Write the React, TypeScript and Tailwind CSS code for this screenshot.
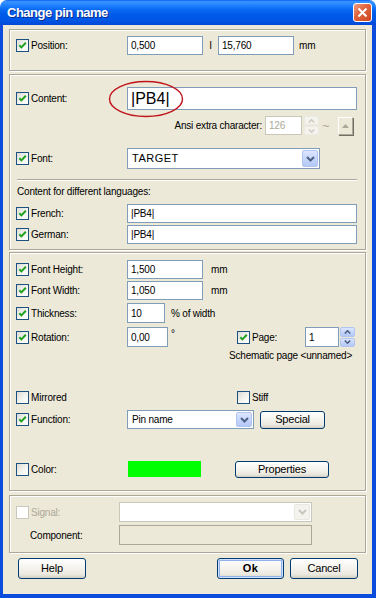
import React from "react";

const Check = ({ checked = true, disabled = false }: { checked?: boolean; disabled?: boolean }) => (
  <span
    className={
      "relative inline-block w-[13px] h-[13px] shrink-0 border " +
      (disabled
        ? "border-[#cac8bb] bg-white"
        : "border-[#1c5180] bg-[linear-gradient(135deg,#dcdcd7_0%,#f4f4f0_55%,#ffffff_100%)]")
    }
  >
    {checked && (
      <svg className="absolute left-0 top-0" width="11" height="11" viewBox="0 0 11 11">
        <path d="M2.3 5.2 L4.4 7.4 L8.8 2.8" fill="none" stroke="#21a121" strokeWidth="2" />
      </svg>
    )}
  </span>
);

const Label = ({
  checked = true,
  disabled = false,
  text,
  w = "w-[111px]",
}: {
  checked?: boolean;
  disabled?: boolean;
  text: string;
  w?: string;
}) => (
  <div className={w + " flex items-center shrink-0"}>
    <Check checked={checked} disabled={disabled} />
    <span className={"ml-[2px] " + (disabled ? "text-[#aca899]" : "")}>{text}</span>
  </div>
);

const Input = ({ w, h = "h-[19px]", children, big = false }: { w: string; h?: string; children?: React.ReactNode; big?: boolean }) => (
  <div
    className={
      w +
      " " +
      h +
      " shrink-0 border border-[#7f9db9] bg-white flex items-center pl-[3px] " +
      (big ? "text-[16px] tracking-normal" : "")
    }
  >
    {children}
  </div>
);

const Chevron = ({ color = "#4d6185" }: { color?: string }) => (
  <svg width="9" height="6" viewBox="0 0 9 6">
    <path d="M1 1 L4.5 4.5 L8 1" fill="none" stroke={color} strokeWidth="2" />
  </svg>
);

const ComboButton = ({ disabled = false }: { disabled?: boolean }) => (
  <div
    className={
      "w-[16px] h-full ml-auto border rounded-[2px] flex items-center justify-center " +
      (disabled
        ? "border-[#e8e7e0] bg-[#f4f3ee]"
        : "border-[#b2c5f1] bg-[linear-gradient(180deg,#dde7fe_0%,#c6d6fb_50%,#b4c8f6_100%)]")
    }
  >
    <Chevron color={disabled ? "#c9c7ba" : "#4d6185"} />
  </div>
);

const Combo = ({ w, h = "h-[19px]", text, disabled = false, big = false }: { w: string; h?: string; text?: string; disabled?: boolean; big?: boolean }) => (
  <div
    className={
      w +
      " " +
      h +
      " shrink-0 border bg-white flex items-center p-[1px] " +
      (disabled ? "border-[#c9c7ba]" : "border-[#7f9db9]")
    }
  >
    <span className={"pl-[3px] " + (big ? "text-[11px] tracking-[0.5px]" : "")}>{text}</span>
    <ComboButton disabled={disabled} />
  </div>
);

const XPButton = ({ w, h = "h-[21px]", children, def = false, bold = false }: { w: string; h?: string; children: React.ReactNode; def?: boolean; bold?: boolean }) => (
  <div
    className={
      w +
      " " +
      h +
      " shrink-0 border border-[#003c74] rounded-[3px] flex items-center justify-center text-[11px] bg-[linear-gradient(180deg,#ffffff_0%,#f5f4ee_45%,#ebe9e0_80%,#d6d0c5_100%)] " +
      (def ? "shadow-[inset_0_0_0_1px_#cee0fb,inset_0_0_0_2px_#8fb2ef] " : "shadow-[inset_0_-1px_0_#d8d2c6] ") +
      (bold ? "font-bold tracking-[0.5px]" : "")
    }
  >
    {children}
  </div>
);

const Spin = ({ disabled = false }: { disabled?: boolean }) => (
  <div className="w-[15px] h-full flex flex-col gap-[1px] shrink-0">
    {[0, 1].map((i) => (
      <div
        key={i}
        className={
          "flex-1 rounded-[2px] flex items-center justify-center border " +
          (disabled
            ? "border-[#ebeae4] bg-[#f4f3ee]"
            : "border-[#b2c5f1] bg-[linear-gradient(180deg,#dde7fe_0%,#c6d6fb_50%,#b4c8f6_100%)]")
        }
      >
        <svg width="7" height="4" viewBox="0 0 7 4" className={i === 0 ? "rotate-180" : ""}>
          <path d="M0.8 0.5 L3.5 3.2 L6.2 0.5" fill="none" stroke={disabled ? "#cfcdc2" : "#4d6185"} strokeWidth="1.6" />
        </svg>
      </div>
    ))}
  </div>
);

const Panel = ({ h, mt = "", children, rel = false }: { h: string; mt?: string; children: React.ReactNode; rel?: boolean }) => (
  <div
    className={
      h +
      " " +
      mt +
      " shrink-0 border border-[#aca899] shadow-[inset_1px_1px_0_#ffffff,1px_1px_0_#ffffff] flex flex-col pl-[6px] " +
      (rel ? "relative" : "")
    }
  >
    {children}
  </div>
);

export default function App() {
  return (
    <div className="w-[376px] h-[598px] bg-white overflow-hidden font-['Liberation_Sans',Arial,sans-serif] text-[10px] tracking-[-0.2px] text-black">
      <div className="w-full h-full flex flex-col rounded-t-[7px] overflow-hidden">
        {/* Title bar */}
        <div className="h-[25px] shrink-0 flex items-center pl-[7px] pr-[4px] bg-[linear-gradient(180deg,#0a5ff0_0%,#3d95ff_7%,#2386ff_18%,#0b6af4_38%,#005ae8_58%,#0055e5_82%,#0047d6_100%)]">
          <span className="text-white font-bold text-[13px] tracking-[-0.5px] [text-shadow:1px_1px_0_#0a2d8c]">
            Change pin name
          </span>
          <div className="ml-auto w-[19px] h-[19px] rounded-[3px] border border-white bg-[linear-gradient(135deg,#f0a184_0%,#e1663f_40%,#cc4520_100%)] flex items-center justify-center">
            <svg width="11" height="11" viewBox="0 0 11 11">
              <path d="M1.5 1.5 L9.5 9.5 M9.5 1.5 L1.5 9.5" stroke="#ffffff" strokeWidth="2" />
            </svg>
          </div>
        </div>

        {/* Body */}
        <div className="flex-1 flex flex-col bg-[#ece9d8] border-l-[3px] border-r-[4px] border-b-[4px] border-[#0b4cdc] px-[6px] pt-[4px]">
          {/* Panel 1 */}
          <Panel h="h-[42px]">
            <div className="flex items-center h-[19px] mt-[6px]">
              <Label text="Position:" />
              <Input w="w-[76px]">0,500</Input>
              <span className="w-[15px] text-center">I</span>
              <Input w="w-[76px]">15,760</Input>
              <span className="ml-[5px]">mm</span>
            </div>
          </Panel>

          {/* Panel 2 */}
          <Panel h="h-[176px]" mt="mt-[3px]" rel>
            <div className="flex items-center h-[23px] mt-[12px]">
              <Label text="Content:" />
              <Input w="w-[230px]" h="h-[23px]" big>
                |PB4|
              </Input>
            </div>
            <div className="flex items-center justify-end h-[19px] mt-[6px] pr-[12px]">
              <span className="mr-[3px]">Ansi extra character:</span>
              <div className="w-[37px] h-full border border-[#c9c7ba] bg-white flex items-center pl-[3px] text-[#aca899]">126</div>
              <div className="ml-[2px] h-full flex">
                <Spin disabled />
              </div>
              <span className="ml-[3px] w-[10px] text-[#aca899] text-[13px] leading-none">~</span>
              <div className="ml-[6px] w-[15px] h-[18px] border border-[#aca899] border-t-white border-l-white shadow-[1px_1px_0_#716f64] flex items-center justify-center">
                <svg width="7" height="4" viewBox="0 0 7 4">
                  <path d="M0 4 L3.5 0 L7 4 Z" fill="#aca899" />
                </svg>
              </div>
            </div>
            <div className="flex items-center h-[21px] mt-[13px]">
              <Label text="Font:" />
              <Combo w="w-[193px]" h="h-[21px]" text="TARGET" big />
            </div>
            <div className="h-[2px] mt-[10px] ml-[1px] mr-[8px] border-t border-[#aca899] border-b border-b-white" />
            <div className="h-[14px] mt-[3px] ml-[1px] flex items-center">Content for different languages:</div>
            <div className="flex items-center h-[19px] mt-[6px]">
              <Label text="French:" />
              <Input w="w-[230px]">|PB4|</Input>
            </div>
            <div className="flex items-center h-[19px] mt-[2px]">
              <Label text="German:" />
              <Input w="w-[230px]">|PB4|</Input>
            </div>
            <svg className="absolute left-[98px] top-[5px]" width="76" height="38" viewBox="0 0 76 38">
              <ellipse cx="38" cy="19" rx="36.5" ry="17.5" fill="none" stroke="#c0141c" strokeWidth="1.4" />
            </svg>
          </Panel>

          {/* Panel 3 */}
          <Panel h="h-[239px]" mt="mt-[2px]">
            <div className="flex items-center h-[19px] mt-[7px]">
              <Label text="Font Height:" />
              <Input w="w-[76px]">1,500</Input>
              <span className="ml-[8px]">mm</span>
            </div>
            <div className="flex items-center h-[19px] mt-[2px]">
              <Label text="Font Width:" />
              <Input w="w-[76px]">1,050</Input>
              <span className="ml-[8px]">mm</span>
            </div>
            <div className="flex items-center h-[20px] mt-[3px]">
              <Label text="Thickness:" />
              <Input w="w-[38px]" h="h-[20px]">10</Input>
              <span className="ml-[6px]">% of width</span>
            </div>
            <div className="flex items-center h-[20px] mt-[4px]">
              <Label text="Rotation:" />
              <Input w="w-[41px]" h="h-[20px]">0,00</Input>
              <span className="w-[69px] pl-[3px] self-start leading-[14px]">°</span>
              <Label text="Page:" w="w-[68px]" />
              <Input w="w-[34px]" h="h-[20px]">1</Input>
              <div className="ml-[1px] h-full flex">
                <Spin />
              </div>
            </div>
            <div className="h-[14px] mt-[1px] pl-[213px] flex items-center">Schematic page &lt;unnamed&gt;</div>
            <div className="flex items-center h-[16px] mt-[27px]">
              <Label text="Mirrored" checked={false} />
              <div className="w-[110px] shrink-0" />
              <Label text="Stiff" checked={false} w="w-[60px]" />
            </div>
            <div className="flex items-center h-[19px] mt-[5px]">
              <Label text="Function:" />
              <Combo w="w-[127px]" text="Pin name" />
              <div className="ml-[6px]">
                <XPButton w="w-[65px]" h="h-[18px]">Special</XPButton>
              </div>
            </div>
            <div className="flex items-center h-[18px] mt-[31px]">
              <Label text="Color:" checked={false} />
              <div className="ml-[1px] w-[73px] h-[16px] bg-[#00ff00] shrink-0" />
              <div className="ml-[34px]">
                <XPButton w="w-[94px]" h="h-[17px]">Properties</XPButton>
              </div>
            </div>
          </Panel>

          {/* Panel 4 */}
          <Panel h="h-[58px]" mt="mt-[4px]">
            <div className="flex items-center h-[20px] mt-[6px]">
              <Label text="Signal:" checked={false} disabled w="w-[103px]" />
              <Combo w="w-[193px]" h="h-[20px]" disabled />
            </div>
            <div className="flex items-center h-[20px] mt-[3px]">
              <div className="w-[103px] pl-[14px] shrink-0">Component:</div>
              <div className="w-[193px] h-full border border-[#aca899] bg-[#ece9d8] shrink-0" />
            </div>
          </Panel>

          {/* Buttons */}
          <div className="flex items-center h-[21px] mt-[5px]">
            <div className="ml-[9px]">
              <XPButton w="w-[68px]">Help</XPButton>
            </div>
            <div className="ml-[131px]">
              <XPButton w="w-[67px]" def bold>
                Ok
              </XPButton>
            </div>
            <div className="ml-[6px]">
              <XPButton w="w-[68px]">Cancel</XPButton>
            </div>
          </div>
        </div>
      </div>
    </div>
  );
}
